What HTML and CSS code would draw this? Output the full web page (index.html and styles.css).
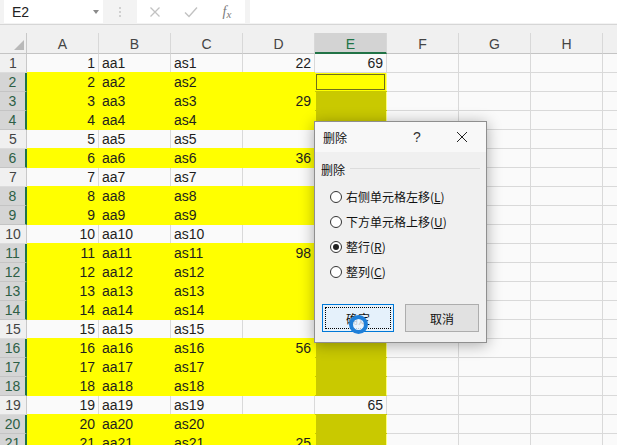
FILE: index.html
```html
<!DOCTYPE html>
<html lang="zh-CN">
<head>
<meta charset="utf-8">
<title>删除</title>
<link rel="stylesheet" href="styles.css">
</head>
<body>
<div class="fbar">
  <div class="namebox"><span>E2</span><span class="dd"></span></div>
  <div class="grip"><svg width="4" height="12" viewBox="0 0 4 12"><circle cx="2" cy="2" r="1" fill="#c4c4c4"/><circle cx="2" cy="6" r="1" fill="#c4c4c4"/><circle cx="2" cy="10" r="1" fill="#c4c4c4"/></svg></div>
  <div class="fbtns">
    <span class="fb"><svg width="12" height="12" viewBox="0 0 12 12"><path d="M1.5 1.5L10.5 10.5M10.5 1.5L1.5 10.5" stroke="#c2c2c2" stroke-width="1.3" fill="none"/></svg></span>
    <span class="fb"><svg width="14" height="12" viewBox="0 0 14 12"><path d="M1 6.5L5 10.5L13 1.5" stroke="#c2c2c2" stroke-width="1.4" fill="none"/></svg></span>
    <span class="fb fx"><i>f</i><i class="sx">x</i></span>
  </div>
  <div class="finput"></div>
</div>
<div class="gap"></div>
<div class="sheet">
  <div class="row head">
    <div class="corner"><svg width="10" height="10" viewBox="0 0 10 10"><path d="M10 0L10 10L0 10Z" fill="#b9b9b9"/></svg></div>
    <div>A</div><div>B</div><div>C</div><div>D</div><div class="sel">E</div><div>F</div><div>G</div><div>H</div><div></div>
  </div>
  <div class="row"><div class="rh">1</div><div class="a">1</div><div class="b">aa1</div><div class="c">as1</div><div class="d">22</div><div class="e">69</div><div></div><div></div><div></div><div></div></div>
  <div class="row hl"><div class="rh">2</div><div class="a">2</div><div class="b">aa2</div><div class="c">as2</div><div class="d"></div><div class="e act"></div><div></div><div></div><div></div><div></div></div>
  <div class="row hl"><div class="rh">3</div><div class="a">3</div><div class="b">aa3</div><div class="c">as3</div><div class="d">29</div><div class="e"></div><div></div><div></div><div></div><div></div></div>
  <div class="row hl"><div class="rh">4</div><div class="a">4</div><div class="b">aa4</div><div class="c">as4</div><div class="d"></div><div class="e"></div><div></div><div></div><div></div><div></div></div>
  <div class="row"><div class="rh">5</div><div class="a">5</div><div class="b">aa5</div><div class="c">as5</div><div class="d"></div><div class="e"></div><div></div><div></div><div></div><div></div></div>
  <div class="row hl"><div class="rh">6</div><div class="a">6</div><div class="b">aa6</div><div class="c">as6</div><div class="d">36</div><div class="e"></div><div></div><div></div><div></div><div></div></div>
  <div class="row"><div class="rh">7</div><div class="a">7</div><div class="b">aa7</div><div class="c">as7</div><div class="d"></div><div class="e"></div><div></div><div></div><div></div><div></div></div>
  <div class="row hl"><div class="rh">8</div><div class="a">8</div><div class="b">aa8</div><div class="c">as8</div><div class="d"></div><div class="e"></div><div></div><div></div><div></div><div></div></div>
  <div class="row hl"><div class="rh">9</div><div class="a">9</div><div class="b">aa9</div><div class="c">as9</div><div class="d"></div><div class="e"></div><div></div><div></div><div></div><div></div></div>
  <div class="row"><div class="rh">10</div><div class="a">10</div><div class="b">aa10</div><div class="c">as10</div><div class="d"></div><div class="e"></div><div></div><div></div><div></div><div></div></div>
  <div class="row hl"><div class="rh">11</div><div class="a">11</div><div class="b">aa11</div><div class="c">as11</div><div class="d">98</div><div class="e"></div><div></div><div></div><div></div><div></div></div>
  <div class="row hl"><div class="rh">12</div><div class="a">12</div><div class="b">aa12</div><div class="c">as12</div><div class="d"></div><div class="e"></div><div></div><div></div><div></div><div></div></div>
  <div class="row hl"><div class="rh">13</div><div class="a">13</div><div class="b">aa13</div><div class="c">as13</div><div class="d"></div><div class="e"></div><div></div><div></div><div></div><div></div></div>
  <div class="row hl"><div class="rh">14</div><div class="a">14</div><div class="b">aa14</div><div class="c">as14</div><div class="d"></div><div class="e"></div><div></div><div></div><div></div><div></div></div>
  <div class="row"><div class="rh">15</div><div class="a">15</div><div class="b">aa15</div><div class="c">as15</div><div class="d"></div><div class="e"></div><div></div><div></div><div></div><div></div></div>
  <div class="row hl"><div class="rh">16</div><div class="a">16</div><div class="b">aa16</div><div class="c">as16</div><div class="d">56</div><div class="e"></div><div></div><div></div><div></div><div></div></div>
  <div class="row hl"><div class="rh">17</div><div class="a">17</div><div class="b">aa17</div><div class="c">as17</div><div class="d"></div><div class="e"></div><div></div><div></div><div></div><div></div></div>
  <div class="row hl"><div class="rh">18</div><div class="a">18</div><div class="b">aa18</div><div class="c">as18</div><div class="d"></div><div class="e"></div><div></div><div></div><div></div><div></div></div>
  <div class="row"><div class="rh">19</div><div class="a">19</div><div class="b">aa19</div><div class="c">as19</div><div class="d"></div><div class="e">65</div><div></div><div></div><div></div><div></div></div>
  <div class="row hl"><div class="rh">20</div><div class="a">20</div><div class="b">aa20</div><div class="c">as20</div><div class="d"></div><div class="e"></div><div></div><div></div><div></div><div></div></div>
  <div class="row hl"><div class="rh">21</div><div class="a">21</div><div class="b">aa21</div><div class="c">as21</div><div class="d">25</div><div class="e"></div><div></div><div></div><div></div><div></div></div>
</div>

<div class="dlg">
  <div class="dlg-title">
    <span class="ttl">删除</span>
    <span class="q">?</span>
    <span class="close"><svg width="12" height="12" viewBox="0 0 12 12"><path d="M1 1L11 11M11 1L1 11" stroke="#222" stroke-width="1" fill="none"/></svg></span>
  </div>
  <div class="dlg-body">
    <div class="grp"><span>删除</span><span class="line"></span></div>
    <div class="opts">
      <div class="opt"><span class="radio"></span><span>右侧单元格左移(<u>L</u>)</span></div>
      <div class="opt"><span class="radio"></span><span>下方单元格上移(<u>U</u>)</span></div>
      <div class="opt"><span class="radio on"></span><span>整行(<u>R</u>)</span></div>
      <div class="opt"><span class="radio"></span><span>整列(<u>C</u>)</span></div>
    </div>
    <div class="btns">
      <div class="btn ok"><span class="focus">确定</span></div>
      <div class="btn cancel">取消</div>
    </div>
  </div>
</div>
<div class="cursor"></div>
</body>
</html>
```

FILE: styles.css
```css
html, body {
  margin: 0;
  padding: 0;
}
body {
  width: 617px;
  height: 445px;
  overflow: hidden;
  position: relative;
  background: #fafafa;
  font-family: "Liberation Sans", "Noto Sans CJK SC", sans-serif;
  color: #1e1e1e;
}

/* formula bar */
.fbar {
  height: 25px;
  box-sizing: border-box;
  border-bottom: 1px solid #d6d6d6;
  background: #f3f3f3;
  display: flex;
  align-items: flex-start;
}
.namebox {
  margin-left: 4px;
  width: 99px;
  height: 23px;
  box-sizing: border-box;
  background: #fff;
  display: flex;
  align-items: center;
  padding: 0 4px 0 8px;
  font-size: 14px;
  color: #222;
}
.dd {
  margin-left: auto;
  width: 0;
  height: 0;
  border-left: 3.5px solid transparent;
  border-right: 3.5px solid transparent;
  border-top: 4px solid #8a8a8a;
}
.grip {
  width: 34px;
  height: 23px;
  display: flex;
  align-items: center;
  justify-content: center;
}
.fbtns {
  width: 108px;
  height: 23px;
  background: #fff;
  display: flex;
}
.fb {
  width: 36px;
  display: flex;
  align-items: center;
  justify-content: center;
}
.fx {
  font-family: "Liberation Serif", serif;
  font-size: 14px;
  color: #7a7a7a;
}
.fx i { font-style: italic; }
.fx .sx { font-size: 11px; position: relative; top: 2px; }
.finput {
  margin-left: 5px;
  flex: 1;
  height: 23px;
  background: #fff;
}
.gap {
  height: 8px;
  background: #f0f0f0;
}

/* sheet */
.row {
  display: grid;
  grid-template-columns: 27px repeat(9, 72px);
  height: 19px;
  font-size: 14px;
  line-height: 18px;
}
.row > div {
  box-sizing: border-box;
  border-right: 1px solid #d9d9d9;
  border-bottom: 1px solid #d9d9d9;
  padding: 0 3px;
  white-space: nowrap;
  overflow: hidden;
}
.row .a, .row .d, .row .e { text-align: right; }

.row .rh {
  background: #f0f0f0;
  border-right: 1px solid #c8c8c8;
  border-bottom: 1px solid #dcdcdc;
  color: #444;
  padding: 0;
  text-align: center;
}
.row.hl .rh {
  background: #d5d5d5;
  border-right: 2px solid #217346;
  border-bottom-color: #c4c4c4;
  color: #2d5f45;
}

.row.hl .a, .row.hl .b, .row.hl .c, .row.hl .d {
  background: #ffff00;
  border-color: #ffff00;
  box-shadow: 0 -1px 0 #ffff00;
}
.row.hl .e {
  background: #c9c900;
  border-right-color: #ffff7a;
  border-bottom-color: #c9c900;
  box-shadow: inset 1px 0 0 #ffff00, 0 -1px 0 #c9c900;
}
.row.hl .e.act {
  background: #ffff00;
  border-bottom-color: #ffff00;
  box-shadow: inset 0 0 0 1px #ffff00, inset 0 0 0 2px #6f6f1c;
}

.row.head {
  height: 21px;
  background: #f0f0f0;
  color: #444;
  line-height: 20px;
}
.row.head > div {
  text-align: center;
  border-right: 1px solid #d8d8d8;
  border-bottom: 1px solid #c4c4c4;
  padding-top: 1px;
}
.row.head .corner {
  border-right: 1px solid #c8c8c8;
  display: flex;
  align-items: flex-end;
  justify-content: flex-end;
  padding: 0 2px 3px 0;
}
.row.head .sel {
  background: #d3d3d3;
  color: #217346;
  border-bottom: 2px solid #217346;
}

/* dialog */
.dlg {
  position: absolute;
  left: 314px;
  top: 121px;
  width: 173px;
  height: 222px;
  box-sizing: border-box;
  border: 1px solid #8f8f8f;
  background: #f0f0f0;
  box-shadow: 0 2px 14px rgba(0, 0, 0, 0.32);
  font-family: "Noto Sans CJK SC", "Liberation Sans", sans-serif;
  font-size: 12px;
  color: #111;
  display: flex;
  flex-direction: column;
}
.dlg-title {
  height: 30px;
  background: #f8f8f8;
  display: flex;
  align-items: center;
  padding: 0 9px 0 8px;
}
.q {
  margin-left: auto;
  width: 20px;
  text-align: center;
  font-family: "Liberation Sans", sans-serif;
  font-size: 14px;
  color: #333;
}
.close {
  margin-left: 20px;
  width: 30px;
  display: flex;
  justify-content: center;
}
.dlg-body {
  flex: 1;
  display: flex;
  flex-direction: column;
  padding: 9px 6px 10px 6px;
}
.grp {
  display: flex;
  align-items: center;
  height: 16px;
}
.grp .line {
  flex: 1;
  margin-left: 5px;
  margin-top: -1px;
  border-top: 1px solid #dcdcdc;
}
.opts {
  margin-top: 7px;
}
.opt {
  height: 25px;
  display: flex;
  align-items: center;
  padding-left: 9px;
}
.opt u { text-underline-offset: 1px; }
.radio {
  width: 12px;
  height: 12px;
  box-sizing: border-box;
  border: 1px solid #333;
  border-radius: 50%;
  background: #fff;
  margin-right: 4px;
  display: flex;
  align-items: center;
  justify-content: center;
}
.radio.on::after {
  content: "";
  width: 6px;
  height: 6px;
  border-radius: 50%;
  background: #222;
}
.btns {
  margin-top: auto;
  display: flex;
  padding-left: 1px;
  gap: 11px;
}
.btn {
  height: 28px;
  box-sizing: border-box;
  display: flex;
  align-items: center;
  justify-content: center;
}
.btn.ok {
  width: 72px;
  border: 1px solid #0078d7;
  background: #e5f1fb;
  padding: 2px;
}
.btn.ok .focus {
  flex: 1;
  align-self: stretch;
  border: 1px dotted #000;
  display: flex;
  align-items: center;
  justify-content: center;
}
.btn.cancel {
  width: 74px;
  border: 1px solid #adadad;
  background: #e1e1e1;
}

/* click indicator */
.cursor {
  position: absolute;
  left: 349px;
  top: 315px;
  width: 19px;
  height: 19px;
  box-sizing: border-box;
  border: 4px solid #1f7fd8;
  border-radius: 50%;
  background: rgba(235, 245, 255, 0.8);
}
```
